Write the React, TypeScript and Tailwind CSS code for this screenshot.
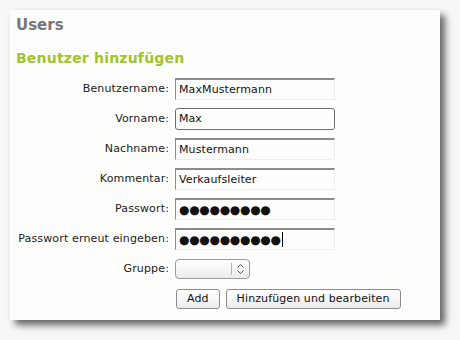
import React from 'react';

const labelCls = 'text-right text-[11px] leading-[30px] tracking-[0.15px] text-[#222] pr-[1px]';
const insetCls =
  'h-[22px] w-[160px] bg-[#fefefe] border-t-2 border-l border-r border-b border-t-[#8c8c8c] border-l-[#8c8c8c] border-r-[#eeeeee] border-b-[#eeeeee] px-[3px] text-[11px] leading-[19px] tracking-[0.1px] text-[#111]';

const Row: React.FC<{ label: string; children: React.ReactNode }> = ({ label, children }) => (
  <>
    <div className={labelCls}>{label}</div>
    <div className="flex h-[30px] items-center">{children}</div>
  </>
);

const App: React.FC = () => {
  return (
    <div
      className="h-[340px] w-[460px] bg-[#f7f7f5] pt-[10px] pl-[10px]"
      style={{ fontFamily: '"DejaVu Sans", Verdana, sans-serif' }}
    >
      <div className="h-[310px] w-[430px] bg-[#fdfdfb] pl-[6px] pt-[5px] shadow-[5px_5px_7px_rgba(0,0,0,0.6)]">
        <h1 className="text-[15px] font-bold leading-[20px] text-[#777777]">Users</h1>
        <h2 className="mt-[13px] text-[14px] font-bold leading-[20px] tracking-[0.2px] text-[#a0c42c]">
          Benutzer hinzufügen
        </h2>
        <div className="mt-[6px] grid grid-cols-[154px_1fr] gap-x-[5px]">
          <Row label="Benutzername:">
            <div className={insetCls}>MaxMustermann</div>
          </Row>
          <Row label="Vorname:">
            <div className="h-[22px] w-[160px] rounded-[3px] border border-[#6e6e6e] bg-[#fefefe] px-[3px] text-[11px] leading-[20px] text-[#111]">
              Max
            </div>
          </Row>
          <Row label="Nachname:">
            <div className={insetCls}>Mustermann</div>
          </Row>
          <Row label="Kommentar:">
            <div className={insetCls}>Verkaufsleiter</div>
          </Row>
          <Row label="Passwort:">
            <div className={`${insetCls} flex items-center`}>
              <span className="text-[12px] leading-none tracking-[-0.3px]">●●●●●●●●●</span>
            </div>
          </Row>
          <Row label="Passwort erneut eingeben:">
            <div className={`${insetCls} flex items-center`}>
              <span className="text-[12px] leading-none tracking-[-0.3px]">●●●●●●●●●●</span>
              <span className="ml-[1px] h-[15px] w-[1px] bg-black" />
            </div>
          </Row>
          <Row label="Gruppe:">
            <div className="flex h-[20px] w-[75px] items-center rounded-[4px] border border-[#9a9a9a] bg-gradient-to-b from-[#ffffff] to-[#ececec]">
              <div className="flex-1" />
              <div className="h-[12px] w-[1px] bg-[#b5b5b5]" />
              <svg width="17" height="14" viewBox="0 0 17 14" className="text-[#555]">
                <path d="M5.5 5.5 L8.5 2.5 L11.5 5.5" fill="none" stroke="currentColor" strokeWidth="1" />
                <path d="M5.5 8.5 L8.5 11.5 L11.5 8.5" fill="none" stroke="currentColor" strokeWidth="1" />
              </svg>
            </div>
          </Row>
          <div />
          <div className="flex h-[30px] items-center gap-[6px] pl-[1px]">
            <button className="h-[20px] rounded-[3px] border border-[#8c8c8c] bg-gradient-to-b from-[#ffffff] to-[#ececec] px-[10px] text-[11px] leading-[18px] tracking-[0.1px] text-[#111]">
              Add
            </button>
            <button className="h-[20px] rounded-[3px] border border-[#8c8c8c] bg-gradient-to-b from-[#ffffff] to-[#ececec] px-[10px] text-[11px] leading-[18px] tracking-[0.1px] text-[#111]">
              Hinzufügen und bearbeiten
            </button>
          </div>
        </div>
      </div>
    </div>
  );
};

export default App;
